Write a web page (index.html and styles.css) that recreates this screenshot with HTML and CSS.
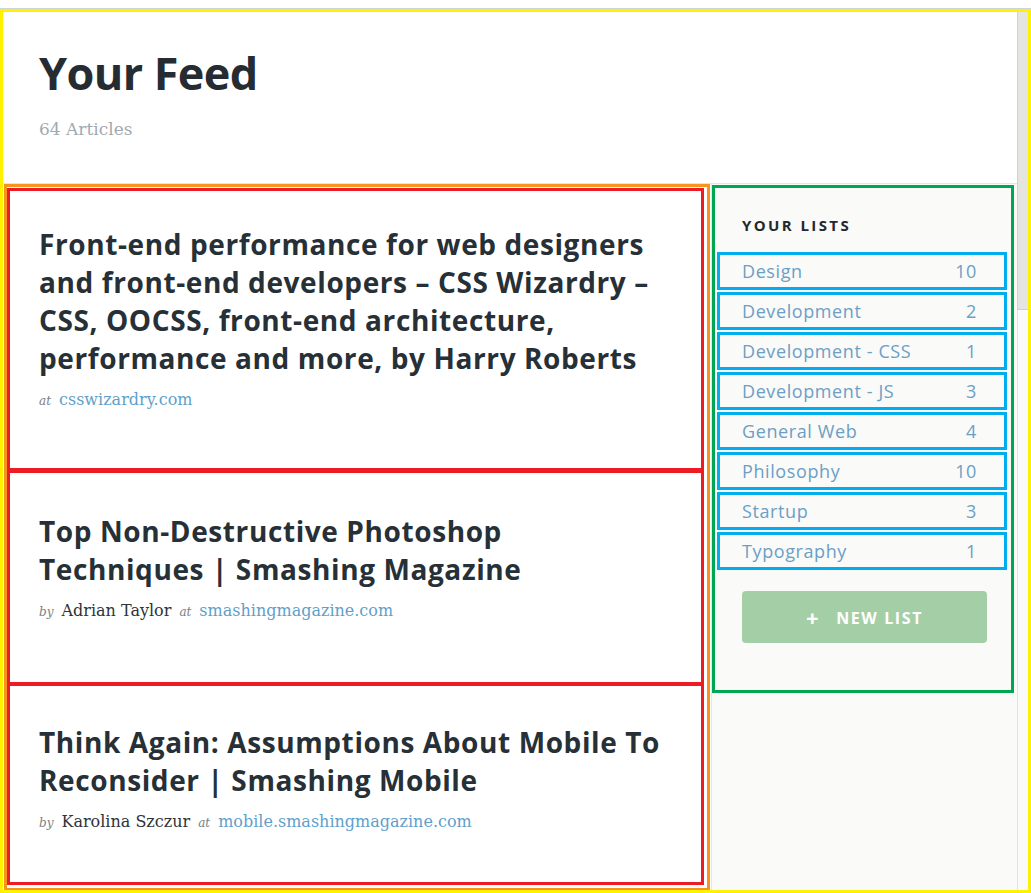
FILE: index.html
```html
<!DOCTYPE html>
<html lang="en">
<head>
<meta charset="utf-8">
<title>Your Feed</title>
<link rel="stylesheet" href="styles.css">
</head>
<body>
<div class="window">
  <div class="frame">
    <div class="page">
      <header class="header">
        <h1 class="header-title">Your Feed</h1>
        <p class="header-count">64 Articles</p>
      </header>
      <div class="content">
        <main class="feed">
          <article class="article">
            <h2 class="article-title">Front-end performance for web designers and front-end developers – CSS Wizardry – CSS, OOCSS, front-end architecture, performance and more, by Harry Roberts</h2>
            <p class="article-meta"><span class="meta-label">at</span><a class="meta-site" href="#">csswizardry.com</a></p>
          </article>
          <article class="article">
            <h2 class="article-title">Top Non-Destructive Photoshop Techniques | Smashing Magazine</h2>
            <p class="article-meta"><span class="meta-label">by</span><span class="meta-author">Adrian Taylor</span><span class="meta-label">at</span><a class="meta-site" href="#">smashingmagazine.com</a></p>
          </article>
          <article class="article">
            <h2 class="article-title">Think Again: Assumptions About Mobile To Reconsider | Smashing Mobile</h2>
            <p class="article-meta"><span class="meta-label">by</span><span class="meta-author">Karolina Szczur</span><span class="meta-label">at</span><a class="meta-site" href="#">mobile.smashingmagazine.com</a></p>
          </article>
        </main>
        <aside class="sidebar">
          <div class="lists">
            <h3 class="lists-title">Your Lists</h3>
            <ul class="list-items">
              <li class="list-item"><span>Design</span><span>10</span></li>
              <li class="list-item"><span>Development</span><span>2</span></li>
              <li class="list-item"><span>Development - CSS</span><span>1</span></li>
              <li class="list-item"><span>Development - JS</span><span>3</span></li>
              <li class="list-item"><span>General Web</span><span>4</span></li>
              <li class="list-item"><span>Philosophy</span><span>10</span></li>
              <li class="list-item"><span>Startup</span><span>3</span></li>
              <li class="list-item"><span>Typography</span><span>1</span></li>
            </ul>
            <button class="new-list" type="button"><span class="new-list-plus">+</span>New List</button>
          </div>
        </aside>
      </div>
    </div>
    <div class="scrollbar"><div class="scrollbar-thumb"></div></div>
  </div>
</div>
</body>
</html>
```
FILE: styles.css
```css
* { box-sizing: border-box; }
html, body { margin: 0; padding: 0; background: #fff; }
body { font-family: "Open Sans", "Liberation Sans", sans-serif; color: #263036; }

.window {
  padding-top: 8px;
  height: 893px;
  overflow: hidden;
}
.frame {
  border-top: 1px solid #cfd2d4;
  display: flex;
  height: 885px;
  position: relative;
}
.frame::after {
  content: "";
  position: absolute;
  inset: 0;
  border: 3px solid #fff200;
  pointer-events: none;
}
.page {
  flex: 1;
  display: flex;
  flex-direction: column;
  padding-left: 3px;
  padding-top: 3px;
  min-width: 0;
}
.header {
  height: 171px;
  padding: 33px 0 0 36px;
  background: #fff;
}
.header-title {
  margin: 0;
  font-size: 45px;
  line-height: 56px;
  font-weight: 700;
  letter-spacing: -0.6px;
  color: #252c32;
}
.header-count {
  margin: 17px 0 0;
  font-family: "DejaVu Serif", "Liberation Serif", serif;
  font-size: 17px;
  line-height: 22px;
  color: #a0a9b0;
}
.content {
  flex: 1;
  display: flex;
  border-top: 1px solid #e6e6e6;
  min-height: 0;
}
.feed {
  border: 3px solid #f7941d;
  margin: 0 1px 2px 1px;
  width: 706px;
  padding: 1px 3px 1px 0;
  display: flex;
  flex-direction: column;
}
.article {
  border: 3px solid #ed1c24;
  padding: 39px 29px 59px 29px;
  background: #fff;
}
.article:first-child { padding-top: 34px; padding-bottom: 56px; }
.article + .article { margin-top: -1px; }
.article:last-child { margin-top: -2px; padding-top: 37px; padding-bottom: 48px; }
.article-title {
  margin: 0;
  font-size: 28px;
  line-height: 38px;
  font-weight: 700;
  color: #263036;
  letter-spacing: 0.6px;
}
.article-meta {
  margin: 12px 0 0;
  font-family: "DejaVu Serif", "Liberation Serif", serif;
  font-size: 16px;
  line-height: 22px;
  display: flex;
  align-items: baseline;
  gap: 8px;
}
.meta-label {
  font-style: italic;
  font-size: 12px;
  color: #7a7f84;
}
.meta-author { color: #2e3338; }
.meta-site { color: #5f9fca; text-decoration: none; }

.sidebar {
  flex: 1;
  background: #fafaf8;
  border-left: 1px solid #e6e6e6;
  padding: 1px 3px 0 0;
}
.lists {
  border: 3px solid #00a651;
  padding: 27px 4px 47px 2px;
}
.lists-title {
  margin: 0 0 17px 25px;
  font-size: 15px;
  line-height: 20px;
  font-weight: 700;
  letter-spacing: 2.4px;
  text-transform: uppercase;
  color: #23282c;
}
.list-items {
  list-style: none;
  margin: 0;
  padding: 0;
  display: flex;
  flex-direction: column;
  gap: 2px;
}
.list-item {
  height: 38px;
  border: 3px solid #00aeef;
  padding: 0 27px 0 22px;
  display: flex;
  justify-content: space-between;
  align-items: center;
  font-size: 18px;
  letter-spacing: 0.6px;
  color: #6b9fc6;
}
.new-list {
  display: block;
  margin: 21px 20px 0 25px;
  width: calc(100% - 45px);
  height: 52px;
  border: 0;
  border-radius: 4px;
  background: #a4cfa6;
  color: #fff;
  font-family: "Open Sans", "Liberation Sans", sans-serif;
  font-size: 16px;
  font-weight: 700;
  letter-spacing: 1.6px;
  text-transform: uppercase;
}
.new-list-plus {
  font-size: 22px;
  margin-right: 16px;
  vertical-align: -2px;
}
.scrollbar {
  width: 14px;
  padding: 3px 3px 3px 0;
  background: #fff;
  display: flex;
  flex-direction: column;
}
.scrollbar-thumb {
  height: 298px;
  background: #e4e4e0;
  border-left: 1px solid #d2d2ce;
  border-bottom: 1px solid #cfcfcb;
}
.scrollbar::after {
  content: "";
  flex: 1;
  border-left: 1px solid #e2e2e2;
  background: #fafafa;
}
```
